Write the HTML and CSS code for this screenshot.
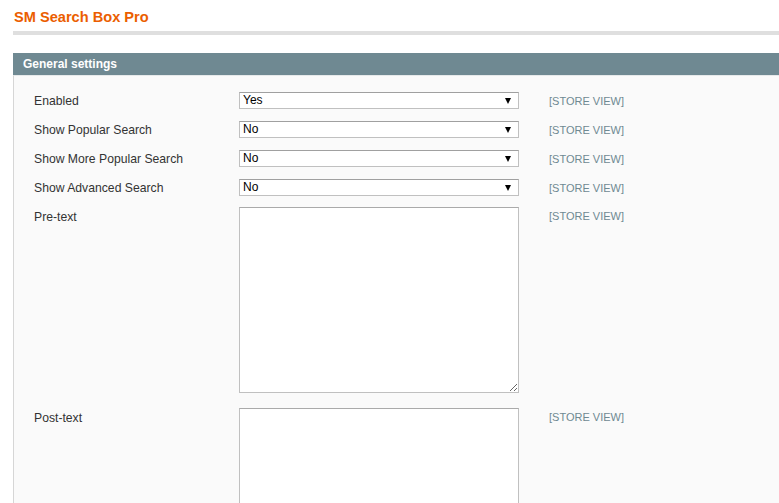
FILE: index.html
```html
<!DOCTYPE html>
<html>
<head>
<meta charset="utf-8">
<link rel="stylesheet" href="styles.css">
</head>
<body>
<div class="page">
  <div class="content-header">
    <h3 class="title">SM Search Box Pro</h3>
  </div>
  <div class="section">
    <div class="section-head">General settings</div>
    <div class="fieldset">
      <div class="row">
        <div class="label">Enabled</div>
        <div class="value"><div class="select-wrap"><select class="select"><option>Yes</option><option>No</option></select></div></div>
        <div class="scope">[STORE VIEW]</div>
      </div>
      <div class="row">
        <div class="label">Show Popular Search</div>
        <div class="value"><div class="select-wrap"><select class="select"><option>No</option><option>Yes</option></select></div></div>
        <div class="scope">[STORE VIEW]</div>
      </div>
      <div class="row">
        <div class="label">Show More Popular Search</div>
        <div class="value"><div class="select-wrap"><select class="select"><option>No</option><option>Yes</option></select></div></div>
        <div class="scope">[STORE VIEW]</div>
      </div>
      <div class="row">
        <div class="label">Show Advanced Search</div>
        <div class="value"><div class="select-wrap"><select class="select"><option>No</option><option>Yes</option></select></div></div>
        <div class="scope">[STORE VIEW]</div>
      </div>
      <div class="row row-text">
        <div class="label label-text">Pre-text</div>
        <div class="value"><textarea class="textarea"></textarea></div>
        <div class="scope scope-text">[STORE VIEW]</div>
      </div>
      <div class="row row-text row-post">
        <div class="label label-text">Post-text</div>
        <div class="value"><textarea class="textarea"></textarea></div>
        <div class="scope scope-text">[STORE VIEW]</div>
      </div>
    </div>
  </div>
</div>
</body>
</html>
```

FILE: styles.css
```css
html, body {
  margin: 0;
  padding: 0;
  background: #fff;
  overflow: hidden;
}

body {
  font-family: "Liberation Sans", Arial, sans-serif;
  font-size: 12px;
  color: #2f2f2f;
}

.page {
  padding-left: 13px;
  width: 766px;
  height: 503px;
  overflow: hidden;
}

.content-header {
  border-bottom: 4px solid #dfdfdf;
  height: 35px;
  box-sizing: border-box;
  padding-top: 8px;
  padding-left: 1px;
}

.title {
  margin: 0;
  font-size: 14.6px;
  line-height: 18px;
  font-weight: bold;
  color: #eb5e00;
}

.section {
  margin-top: 18px;
}

.section-head {
  height: 22px;
  line-height: 22px;
  background: #6f8992;
  color: #fff;
  font-weight: bold;
  font-size: 12px;
  padding-left: 10px;
}

.fieldset {
  background: #fafafa;
  border-left: 1px solid #d6d6d6;
  border-top: 1px solid #e6e9ea;
  padding: 16px 0 40px 20px;
  display: flex;
  flex-direction: column;
  gap: 12px;
}

.row {
  display: flex;
  align-items: flex-start;
  min-height: 17px;
}

.row-text {
  margin-top: -1px;
}

.row-post {
  margin-top: 3px;
}

.label {
  width: 205px;
  padding-top: 1px;
  line-height: 16px;
  font-size: 12.2px;
  color: #333;
}

.label-text {
  padding-top: 2px;
}

.value {
  width: 280px;
}

.select-wrap {
  position: relative;
  width: 280px;
  height: 17px;
}

.select-wrap::after {
  content: "";
  position: absolute;
  right: 8px;
  top: 6px;
  border-left: 3px solid transparent;
  border-right: 3px solid transparent;
  border-top: 6px solid #000;
  pointer-events: none;
}

.select {
  -webkit-appearance: none;
  appearance: none;
  display: block;
  width: 280px;
  height: 17px;
  margin: 0;
  padding: 0 0 0 3px;
  border: 1px solid #aaa;
  border-top-color: #a0a0a0;
  border-left-color: #c0c0c0;
  border-right-color: #c0c0c0;
  border-bottom-color: #c0c0c0;
  border-radius: 0;
  background: #fff;
  font-family: "Liberation Sans", Arial, sans-serif;
  font-size: 12px;
  line-height: 15px;
  color: #000;
  outline: none;
}

.textarea {
  display: block;
  width: 280px;
  height: 186px;
  margin: 0;
  padding: 2px;
  box-sizing: border-box;
  border: 1px solid #aaa;
  border-left-color: #c0c0c0;
  border-right-color: #c0c0c0;
  border-bottom-color: #c0c0c0;
  background: #fff;
  font-family: "Liberation Sans", Arial, sans-serif;
  font-size: 12px;
}

.scope {
  margin-left: 30px;
  padding-top: 1px;
  font-size: 11px;
  line-height: 16px;
  color: #6f8992;
}

.scope-text {
  padding-top: 1px;
}
```
